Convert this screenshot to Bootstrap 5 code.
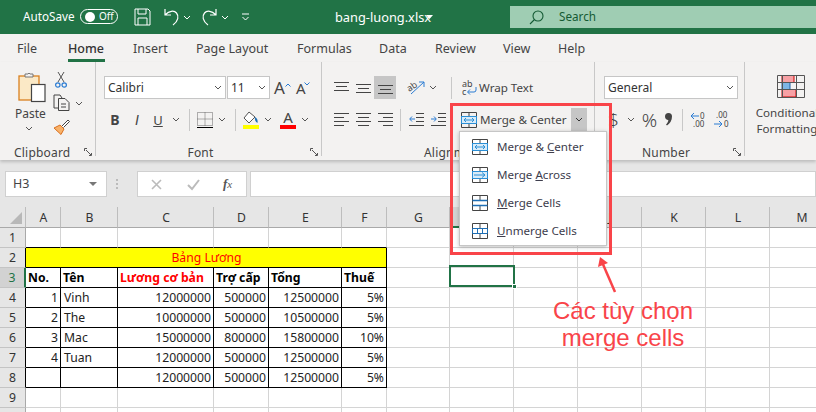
<!DOCTYPE html>
<html lang="vi"><head><meta charset="utf-8"><title>bang-luong.xlsx</title>
<link href="https://cdn.jsdelivr.net/npm/bootstrap@5.3.0/dist/css/bootstrap.min.css" rel="stylesheet">
<style>
html,body{margin:0;height:412px;overflow:hidden}
body{width:816px;position:relative;background:#e6e6e6;font-family:"Noto Sans","Open Sans",sans-serif;font-size:12px;color:#444}
svg{display:block;flex:none;overflow:visible}
.tbar{height:34px;background:#217346;color:#fff;font-size:11.7px;padding-left:23px}
.tog{width:38px;height:15px;border:1px solid #fff;border-radius:8px;font-size:10px;padding-left:4px;gap:4px;position:absolute;left:80px;top:9px}
.knob{width:10px;height:10px;background:#fff;border-radius:50%}
.qat{margin-left:60px}
.fname{position:absolute;left:335px;top:9px;line-height:16px;font-size:12.8px}
.sbox{position:absolute;left:510px;top:6px;right:0;height:22px;background:#9fcdb3;color:#155a34;padding-left:19px;font-size:11.7px}
.rtabs{height:28px;background:#f3f2f1;font-size:12.5px;padding-top:6px}
.rtab{position:absolute;top:39px;line-height:20px}
.rtab.on{font-weight:500;color:#333}
.rtab.on::after{content:"";position:absolute;left:0;right:-1px;top:20px;height:3px;background:#217346}
.rbody{height:98px;background:#f3f2f1;box-shadow:0 2px 3px rgba(0,0,0,.18);position:relative;margin-bottom:5px}
.grp{height:94px;border-right:1px solid #c8c8c8;position:relative;flex:none}
.gl{position:absolute;top:83px;left:0;right:0;text-align:center;line-height:16px;letter-spacing:.2px}
.lnch{position:absolute;right:3px;top:86px}
.rw{position:absolute;height:23px;display:flex;align-items:center;left:0;white-space:nowrap}
.r1{top:14px}.r2{top:46px}
.combo{height:23px;background:#fff;border:1px solid #c6c6c6;justify-content:space-between;display:flex;align-items:center;padding:0 3px;color:#333;flex:none}
.sep{width:1px;height:22px;background:#c8c8c8;flex:none}
.hl{background:#c6c6c6;display:flex;align-items:center;justify-content:center;height:23px;flex:none}
.m1{margin-left:1px}.m2{margin-left:2px}.m3{margin-left:3px}.m4{margin-left:4px}.m5{margin-left:5px}.m6{margin-left:6px}.m7{margin-left:7px}.m8{margin-left:8px}.m9{margin-left:9px}.m10{margin-left:10px}.m11{margin-left:11px}.m12{margin-left:12px}.m13{margin-left:13px}.m14{margin-left:14px}.m15{margin-left:15px}
.w122{width:122px}.w43{width:43px}.w134{width:134px}
.s16{width:16px;text-align:center;flex:none;font-size:14px;line-height:18px}
.bigA{font-size:17px;line-height:20px}.smA{font-size:15px;line-height:20px}
.numg{font-size:19px;font-weight:300;line-height:22px}
.t116{font-size:11.6px}
.abs2{position:absolute}
.fbar{height:42px;padding-top:6px;padding-left:5px}
.nbox{width:102px;height:26px;background:#fff;border:1px solid #d0d0d0;padding:0 9px 0 7px;font-size:12.5px}
.fbtn{width:110px;height:26px;background:#fff;border:1px solid #d0d0d0;margin-left:30px}
.fxl{font-family:"Liberation Serif",serif;color:#555;font-size:13px;margin-left:23px}
.grip{margin-left:-22px}
.finp{flex:1;height:26px;background:#fff;border:1px solid #d0d0d0;margin-left:3px}
.sheet{border-collapse:separate;border-spacing:0;table-layout:fixed;width:834px;background:#fff;font-family:"Noto Sans",sans-serif;font-size:12.2px;color:#222}
.sheet td,.sheet th{height:20px;padding:1px 2px 0 3px;border-right:1px solid #d4d4d4;border-bottom:1px solid #d4d4d4;line-height:18px;overflow:hidden;white-space:nowrap;font-weight:400}
.sheet td.n{text-align:right}
.sheet thead th{background:#e6e6e6;text-align:center;color:#333;border-right-color:#bdbdbd;border-bottom-color:#a9a9a9}
.sheet tbody th{background:#e6e6e6;text-align:center;color:#333;border-right-color:#a9a9a9;border-bottom-color:#c4c4c4;padding:0}
.sheet td.k{border-color:#000}
.sheet td.bb{border-bottom-color:#000}
.sheet tbody th.kr{border-right-color:#000}
.sheet tbody th.sel{background:#d2d2d2;color:#217346;border-right:2px solid #217346}
.sheet thead th.sel{background:#d2d2d2;border-bottom:2px solid #217346;color:#217346}
.sheet td.ttl{background:#ff0;color:#f00;text-align:center}
.sheet td.hb{font-weight:700;color:#000;padding:1px 2px 0}
.sheet td.hr{font-weight:700;color:#f00;padding:1px 2px 0}
.corner{position:relative}
.selbox{position:absolute;left:449px;top:265px;width:66px;height:22px;border:2px solid #217346}
.selbox::after{content:"";position:absolute;right:-4px;bottom:-4px;width:5px;height:5px;background:#217346;border:1px solid #fff}
.mnu{position:absolute;left:459px;top:131px;width:148px;height:115px;background:#fff;border:1px solid #c6c6c6;box-shadow:0 1px 4px rgba(0,0,0,.25);padding:1px 0 0 12px;font-size:11.6px}
.mit{height:28px;gap:9px;color:#3d3d4d}
.rbox{position:absolute;left:450px;top:103px;width:162px;height:152px;border:3px solid #f94449}
.note{position:absolute;left:533px;top:297px;width:180px;text-align:center;font-family:"Liberation Sans",Arial,sans-serif;font-size:24px;line-height:27px;color:#f94449}
.arr{position:absolute;left:590px;top:250px}
.tiny{font-size:11px}
</style></head><body>

<div class="tbar d-flex align-items-center">
 <span>AutoSave</span>
 <div class="tog d-flex align-items-center"><span class="knob"></span><span>Off</span></div>
 <svg class="qat" width="17" height="18" viewBox="0 0 17 18" fill="none" stroke="#fff"><path d="M1 1h13l2 2v14H1zM4 1v5h8V1M4 17v-7h9v7"/></svg>
 <svg class="m13" width="15" height="18" viewBox="0 0 15 18" fill="none" stroke="#fff" stroke-width="1.200"><path d="M1 1v6h6M1.500 6.500C5 3 10 2 12.500 5s2 8-3.500 12"/></svg>
 <svg class="m4" width="8" height="5" viewBox="0 0 8 5" fill="none" stroke="#fff"><path d="M1 1l3 3 3-3"/></svg>
 <svg class="m11" width="15" height="18" viewBox="0 0 15 18" fill="none" stroke="#fff" stroke-width="1.200"><path d="M14 1v6H8M13.500 6.500C10 3 5 2 2.500 5s-2 8 3.500 12"/></svg>
 <svg class="m4" width="8" height="5" viewBox="0 0 8 5" fill="none" stroke="#fff"><path d="M1 1l3 3 3-3"/></svg>
 <svg class="m12" width="9" height="9" viewBox="0 0 9 9" fill="none" stroke="#fff"><path d="M1 1h7M1.500 4l3 3 3-3"/></svg>
 <span class="fname">bang-luong.xlsx</span>
 <svg class="abs2" style="left:426px;top:15px" width="7" height="4" viewBox="0 0 7 4"><path d="M0 0h7L3.500 4z" fill="#fff"/></svg>
 <div class="sbox d-flex align-items-center">
  <svg width="15" height="15" viewBox="0 0 15 15" fill="none" stroke="#155a34" stroke-width="1.100"><circle cx="9" cy="6" r="5"/><path d="M5.500 9.500L1 14"/></svg>
  <span class="m15">Search</span>
 </div>
</div>

<div class="rtabs">
 <span class="rtab" style="left:17px">File</span>
 <span class="rtab on" style="left:68px">Home</span>
 <span class="rtab" style="left:133px">Insert</span>
 <span class="rtab" style="left:196px">Page Layout</span>
 <span class="rtab" style="left:297px">Formulas</span>
 <span class="rtab" style="left:379px">Data</span>
 <span class="rtab" style="left:435px">Review</span>
 <span class="rtab" style="left:503px">View</span>
 <span class="rtab" style="left:558px">Help</span>
</div>

<div class="rbody d-flex">
 <!-- Clipboard -->
 <div class="grp" style="width:96px">
  <svg class="abs2" style="left:18px;top:10px" width="28" height="31" viewBox="0 0 28 31" fill="none"><rect x="1" y="4" width="20" height="24" fill="#fbe9c6" stroke="#d9801f" stroke-width="1.300"/><path d="M7 5V2h3l1-1 1 1h3v3z" fill="#f3f2f1" stroke="#777"/><rect x="13.500" y="12.500" width="13.500" height="17" fill="#fff" stroke="#444" stroke-width="1.200"/></svg>
  <span class="abs2" style="left:15px;top:43px">Paste</span>
  <svg class="abs2" style="left:25px;top:64px" width="8" height="5" viewBox="0 0 8 5" fill="none" stroke="#555"><path d="M1 1l3 3 3-3"/></svg>
  <svg class="abs2" style="left:55px;top:9px" width="12" height="17" viewBox="0 0 12 17" fill="none"><path d="M3 1l6 10M9 1L3 11" stroke="#555"/><circle cx="2.800" cy="14" r="2.200" stroke="#2b7cd3" stroke-width="1.200"/><circle cx="9.200" cy="14" r="2.200" stroke="#2b7cd3" stroke-width="1.200"/></svg>
  <svg class="abs2" style="left:53px;top:32px" width="17" height="17" viewBox="0 0 17 17" fill="none" stroke="#444"><path d="M6 14H1V1h6l2 3"/><path d="M5.500 4.500H12l4 4v8H5.500z" fill="#f3f2f1"/><path d="M8 10h5M8 13h5"/></svg>
  <svg class="abs2" style="left:75px;top:39px" width="8" height="5" viewBox="0 0 8 5" fill="none" stroke="#555"><path d="M1 1l3 3 3-3"/></svg>
  <svg class="abs2" style="left:53px;top:57px" width="17" height="16" viewBox="0 0 17 16" fill="none"><path d="M1 9l6-3 4 4-3 5.500z" fill="#f8b26a" stroke="#d9701f"/><path d="M9 7l6-6 1.500 1.500-6 6" fill="#fff" stroke="#444"/></svg>
  <div class="gl" style="left:14px;right:auto">Clipboard</div>
  <svg class="lnch" width="8" height="8" viewBox="0 0 8 8" fill="none" stroke="#555"><path d="M.5 3V.5H3M7.500 5v2.500H5M2 2l5 5"/></svg>
 </div>
 <!-- Font -->
 <div class="grp" style="width:226px">
  <div class="rw r1">
   <div class="combo w122 m8"><span>Calibri</span><svg width="8" height="5" viewBox="0 0 8 5" fill="none" stroke="#555"><path d="M1 1l3 3 3-3"/></svg></div>
   <div class="combo w43 m1"><span>11</span><svg width="8" height="5" viewBox="0 0 8 5" fill="none" stroke="#555"><path d="M1 1l3 3 3-3"/></svg></div>
   <span class="m4 position-relative bigA">A<svg class="abs2" style="right:-6px;top:5px" width="6" height="4" viewBox="0 0 6 4" fill="none" stroke="#2b7cd3"><path d="M.5 3.500L3 1l2.500 2.500"/></svg></span>
   <span class="position-relative smA" style="margin-left:11px">A<svg class="abs2" style="right:-5px;top:4px" width="6" height="4" viewBox="0 0 6 4" fill="none" stroke="#2b7cd3"><path d="M.5.500L3 3l2.500-2.500"/></svg></span>
  </div>
  <div class="rw r2">
   <b class="s16 m11">B</b>
   <i class="s16 m6" style="font-family:'Liberation Sans',sans-serif">I</i>
   <u class="s16 m5" style="font-size:13px">U</u>
   <svg class="m6" width="8" height="5" viewBox="0 0 8 5" fill="none" stroke="#555"><path d="M1 1l3 3 3-3"/></svg>
   <span class="sep m9"></span>
   <svg class="m7" width="16" height="16" viewBox="0 0 16 16" fill="none" stroke="#666" stroke-dasharray="1 1"><path d="M.5.500h15v13H.5zM8 .5v13M.5 7h15"/><path d="M0 15.500h16" stroke="#000" stroke-dasharray="none"/></svg>
   <svg class="m5" width="8" height="5" viewBox="0 0 8 5" fill="none" stroke="#555"><path d="M1 1l3 3 3-3"/></svg>
   <span class="sep m9"></span>
   <svg class="m7" width="16" height="18" viewBox="0 0 16 18"><path d="M6 1L1 7l5 5 6-6z" fill="#fff" stroke="#555"/><path d="M12 6c2 1 3 3 2.500 6-2-1-3-3-2.500-6z" fill="#1f6fb5"/><rect y="14" width="16" height="4" fill="#ff0"/></svg>
   <svg class="m5" width="8" height="5" viewBox="0 0 8 5" fill="none" stroke="#555"><path d="M1 1l3 3 3-3"/></svg>
   <span class="position-relative m8" style="width:16px;height:18px;text-align:center;line-height:13px;font-size:15px">A<svg class="abs2" style="left:0;bottom:0" width="16" height="4"><rect width="16" height="4" fill="#f00"/></svg></span>
   <svg class="m5" width="8" height="5" viewBox="0 0 8 5" fill="none" stroke="#555"><path d="M1 1l3 3 3-3"/></svg>
  </div>
  <div class="gl" style="right:16px">Font</div>
  <svg class="lnch" width="8" height="8" viewBox="0 0 8 8" fill="none" stroke="#555"><path d="M.5 3V.5H3M7.500 5v2.500H5M2 2l5 5"/></svg>
 </div>
 <!-- Alignment -->
 <div class="grp" style="width:273px">
  <div class="rw r1">
   <svg class="m12" width="15" height="12" viewBox="0 0 15 12" stroke="#444"><path d="M0 1.500h15M2 5.500h11M0 9.500h15" transform="translate(0 -1)"/></svg>
   <svg class="m7" width="15" height="12" viewBox="0 0 15 12" stroke="#444"><path d="M0 2.500h15M2 6.500h11M0 10.500h15"/></svg>
   <div class="hl m3" style="width:22px"><svg width="15" height="12" viewBox="0 0 15 12" stroke="#444"><path d="M0 3.500h15M2 7.500h11M0 11.500h15"/></svg></div>
   <svg class="m12" width="18" height="17" viewBox="0 0 18 17" fill="none"><text x="0" y="11" font-size="9" fill="#444" transform="rotate(-35 4 10)">ab</text><path d="M3 15L16 3M11 3h5v5" stroke="#2b7cd3"/></svg>
   <svg class="m3" width="8" height="5" viewBox="0 0 8 5" fill="none" stroke="#555"><path d="M1 1l3 3 3-3"/></svg>
   <span class="sep m14"></span>
   <svg class="m10" width="15" height="17" viewBox="0 0 15 17"><text x="0" y="8" font-size="9" fill="#444">ab</text><text x="0" y="16" font-size="9" fill="#444">c</text><path d="M14 8v3a2 2 0 0 1-2 2H6M8 10.500L5.500 13 8 15.500" fill="none" stroke="#2b7cd3"/></svg>
   <span class="m2 t116">Wrap Text</span>
  </div>
  <div class="rw r2">
   <svg class="m12" width="15" height="13" viewBox="0 0 15 13" stroke="#444"><path d="M0 .5h15M0 4.500h10M0 8.500h15M0 12.500h10"/></svg>
   <svg class="m7" width="15" height="13" viewBox="0 0 15 13" stroke="#444"><path d="M0 .5h15M2 4.500h11M0 8.500h15M2 12.500h11"/></svg>
   <svg class="m7" width="15" height="13" viewBox="0 0 15 13" stroke="#444"><path d="M0 .5h15M5 4.500h10M0 8.500h15M5 12.500h10"/></svg>
   <span class="sep m7"></span>
   <svg class="m8" width="15" height="13" viewBox="0 0 15 13" fill="none"><path d="M7 .5h8M7 4.500h8M7 8.500h8M0 12.500h15" stroke="#444"/><path d="M6 6H1M3 3.500L.7 6 3 8.500" stroke="#2b7cd3"/></svg>
   <svg class="m7" width="15" height="13" viewBox="0 0 15 13" fill="none"><path d="M7 .5h8M7 4.500h8M7 8.500h8M0 12.500h15" stroke="#444"/><path d="M0 6h5M3 3.500L5.300 6 3 8.500" stroke="#2b7cd3"/></svg>
   <svg class="m15" width="16" height="16" viewBox="0 0 16 16" fill="none"><path d="M.5.500h15v15H.5zM8 .5v4M8 11.500v4" stroke="#444"/><rect x=".5" y="4.500" width="15" height="7" fill="#d8ebf8" stroke="#2b8fd6"/><path d="M3 8h10M5 6L3 8l2 2M11 6l2 2-2 2" stroke="#2b8fd6"/></svg>
   <span class="m3 t116">Merge &amp; Center</span>
   <div class="hl m5" style="width:16px"><svg width="8" height="5" viewBox="0 0 8 5" fill="none" stroke="#333"><path d="M1 1l3 3 3-3"/></svg></div>
  </div>
  <div class="gl" style="left:102px;right:auto">Alignment</div>
 </div>
 <!-- Number -->
 <div class="grp" style="width:150px">
  <div class="rw r1"><div class="combo w134 m9"><span>General</span><svg width="8" height="5" viewBox="0 0 8 5" fill="none" stroke="#555"><path d="M1 1l3 3 3-3"/></svg></div></div>
  <div class="rw r2">
   <span class="numg" style="margin-left:13px">$</span>
   <svg class="m8" width="8" height="5" viewBox="0 0 8 5" fill="none" stroke="#555"><path d="M1 1l3 3 3-3"/></svg>
   <span class="numg m7">%</span>
   <svg class="m7" width="9" height="13" viewBox="0 0 9 13"><path d="M1 3.500a3.500 3.500 0 1 1 7 0c0 4-2 7-5 9l-1-1c1.500-1.500 2.300-3 2.300-4.500C2.500 7 1 5.500 1 3.500z" fill="#444"/></svg>
   <span class="sep m9"></span>
   <svg class="m7" width="17" height="18" viewBox="0 0 17 18" fill="none"><path d="M9 5H1M4 2L1 5l3 3" stroke="#2b7cd3"/><text x="10" y="8" font-size="8" fill="#444">0</text><text x="3" y="16" font-size="8" fill="#444">.00</text></svg>
   <svg class="m6" width="17" height="18" viewBox="0 0 17 18" fill="none"><text x="3" y="7" font-size="8" fill="#444">.00</text><path d="M1 13h8M6 10l3 3-3 3" stroke="#2b7cd3"/><text x="11" y="16" font-size="8" fill="#444">0</text></svg>
  </div>
  <div class="gl" style="left:47px;right:auto">Number</div>
  <svg class="lnch" width="8" height="8" viewBox="0 0 8 8" fill="none" stroke="#555"><path d="M.5 3V.5H3M7.500 5v2.500H5M2 2l5 5"/></svg>
 </div>
 <!-- Styles -->
 <div class="position-relative flex-fill">
  <svg class="abs2" style="left:32px;top:13px" width="28" height="23" viewBox="0 0 28 23" fill="none" stroke="#555"><rect x="5" y=".5" width="12" height="7" fill="#f7a1a5" stroke="#c00"/><rect x="5" y="7.500" width="8" height="7" fill="#7db5e6" stroke="#1f5fa8"/><rect x="5" y="14.500" width="14" height="7.500" fill="#f7a1a5" stroke="#c00"/><path d="M.5.500h27v22H.5zM.5 7.500h27M.5 14.500h27M5.500.5v22M19.500.5v22"/></svg>
  <div class="abs2 text-center t116" style="left:2px;top:43px;width:80px;line-height:16px">Conditional<br>Formatting</div>
 </div>
</div>

<div class="fbar d-flex">
 <div class="nbox d-flex align-items-center justify-content-between"><span>H3</span><svg width="8" height="4" viewBox="0 0 8 4"><path d="M0 0h8L4 4z" fill="#777"/></svg></div>
 <div class="fbtn d-flex align-items-center">
  <svg class="grip" width="2" height="10" viewBox="0 0 2 10" fill="#bbb"><rect width="2" height="2"/><rect y="4" width="2" height="2"/><rect y="8" width="2" height="2"/></svg>
  <svg class="m14" style="margin-left:33px" width="11" height="11" viewBox="0 0 11 11" stroke="#bbb" stroke-width="1.600"><path d="M1 1l9 9M10 1l-9 9"/></svg>
  <svg style="margin-left:25px" width="13" height="11" viewBox="0 0 13 11" fill="none" stroke="#bbb" stroke-width="2"><path d="M1 6l4 4 7-9"/></svg>
  <i class="fxl"><b>f</b><span class="tiny">x</span></i>
 </div>
 <div class="finp"></div>
</div>

<table class="sheet">
 <colgroup><col style="width:26px"><col style="width:35px"><col style="width:57px"><col style="width:96px"><col style="width:55px"><col style="width:73px"><col style="width:45px"><col style="width:63px"><col style="width:64px"><col style="width:64px"><col style="width:64px"><col style="width:64px"><col style="width:64px"><col style="width:64px"></colgroup>
 <thead><tr><th class="corner"><svg class="abs2" style="right:3px;bottom:3px" width="12" height="12" viewBox="0 0 12 12"><path d="M12 0v12H0z" fill="#b8b8b8"/></svg></th><th>A</th><th>B</th><th>C</th><th>D</th><th>E</th><th>F</th><th>G</th><th class="sel">H</th><th>I</th><th>J</th><th>K</th><th>L</th><th>M</th></tr></thead>
 <tbody>
  <tr><th>1</th><td class="bb"></td><td class="bb"></td><td class="bb"></td><td class="bb"></td><td class="bb"></td><td class="bb"></td><td></td><td></td><td></td><td></td><td></td><td></td><td></td></tr>
  <tr><th class="kr">2</th><td colspan="6" class="k ttl">Bảng Lương</td><td></td><td></td><td></td><td></td><td></td><td></td><td></td></tr>
  <tr><th class="sel">3</th><td class="k hb">No.</td><td class="k hb">Tên</td><td class="k hr">Lương cơ bản</td><td class="k hb">Trợ cấp</td><td class="k hb">Tổng</td><td class="k hb">Thuế</td><td></td><td></td><td></td><td></td><td></td><td></td><td></td></tr>
  <tr><th class="kr">4</th><td class="k n">1</td><td class="k">Vinh</td><td class="k n">12000000</td><td class="k n">500000</td><td class="k n">12500000</td><td class="k n">5%</td><td></td><td></td><td></td><td></td><td></td><td></td><td></td></tr>
  <tr><th class="kr">5</th><td class="k n">2</td><td class="k">The</td><td class="k n">10000000</td><td class="k n">500000</td><td class="k n">10500000</td><td class="k n">5%</td><td></td><td></td><td></td><td></td><td></td><td></td><td></td></tr>
  <tr><th class="kr">6</th><td class="k n">3</td><td class="k">Mac</td><td class="k n">15000000</td><td class="k n">800000</td><td class="k n">15800000</td><td class="k n">10%</td><td></td><td></td><td></td><td></td><td></td><td></td><td></td></tr>
  <tr><th class="kr">7</th><td class="k n">4</td><td class="k">Tuan</td><td class="k n">12000000</td><td class="k n">500000</td><td class="k n">12500000</td><td class="k n">5%</td><td></td><td></td><td></td><td></td><td></td><td></td><td></td></tr>
  <tr><th class="kr">8</th><td class="k"></td><td class="k"></td><td class="k n">12000000</td><td class="k n">500000</td><td class="k n">12500000</td><td class="k n">5%</td><td></td><td></td><td></td><td></td><td></td><td></td><td></td></tr>
  <tr><th>9</th><td></td><td></td><td></td><td></td><td></td><td></td><td></td><td></td><td></td><td></td><td></td><td></td><td></td></tr>
  <tr><th>10</th><td></td><td></td><td></td><td></td><td></td><td></td><td></td><td></td><td></td><td></td><td></td><td></td><td></td></tr>
 </tbody>
</table>

<div class="selbox"></div>

<div class="mnu">
 <div class="mit d-flex align-items-center"><svg width="16" height="16" viewBox="0 0 16 16" fill="none"><path d="M.5.500h15v15H.5zM8 .5v4M8 11.500v4" stroke="#444"/><rect x=".5" y="4.500" width="15" height="7" fill="#d8ebf8" stroke="#2b8fd6"/><path d="M3 8h10M5 6L3 8l2 2M11 6l2 2-2 2" stroke="#2b8fd6"/></svg><span>Merge &amp; <u>C</u>enter</span></div>
 <div class="mit d-flex align-items-center"><svg width="16" height="16" viewBox="0 0 16 16" fill="none"><path d="M.5.500h15v15H.5zM8 .5v4M8 11.500v4" stroke="#444"/><rect x=".5" y="4.500" width="15" height="7" fill="#d8ebf8" stroke="#2b8fd6"/><path d="M2 8h11M10 5.500L13 8l-3 2.500" stroke="#2b8fd6"/></svg><span>Merge <u>A</u>cross</span></div>
 <div class="mit d-flex align-items-center"><svg width="16" height="16" viewBox="0 0 16 16" fill="none" stroke="#444"><path d="M.5.500h15v15H.5zM8 .5v5M8 10.500v5"/><path d="M.5 5.500h15M.5 10.500h15" stroke="#1f6fb5" stroke-width="1.300"/></svg><span><u>M</u>erge Cells</span></div>
 <div class="mit d-flex align-items-center"><svg width="16" height="16" viewBox="0 0 16 16" fill="none" stroke="#444"><path d="M.5.500h15v15H.5zM8 .5v5M8 10.500v5"/><path d="M.5 5.500h15v5H.5zM5.500 5.500v5M10.500 5.500v5" stroke="#1f6fb5"/></svg><span><u>U</u>nmerge Cells</span></div>
</div>
<div class="rbox"></div>
<svg class="arr" width="30" height="45" viewBox="0 0 30 45" fill="none"><path d="M25 42L12 12" stroke="#f94449" stroke-width="2.500"/><path d="M10 7l8 6-10 4z" fill="#f94449"/></svg>
<div class="note">Các tùy chọn<br>merge cells</div>

</body></html>
